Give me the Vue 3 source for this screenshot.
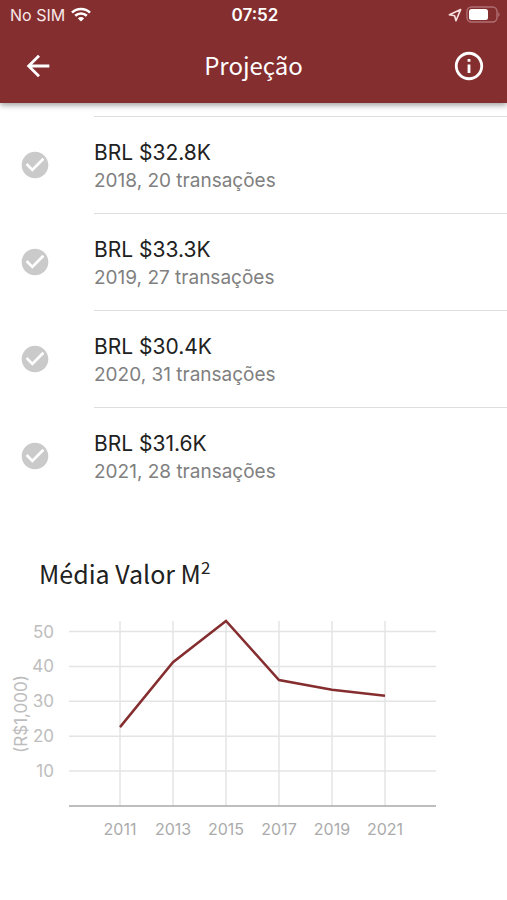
<template>
  <div class="screen">
    <header class="top">
      <div class="status-bar">
        <div class="carrier">
          <span>No SIM</span>
          <svg class="wifi" viewBox="0 0 20 15" aria-hidden="true">
            <path d="M1 5.6a13 13 0 0 1 18 0" />
            <path d="M4.2 8.8a8.4 8.4 0 0 1 11.6 0" />
            <path class="wifi-dot" d="M10 14.6l-3.1-3.2a4.4 4.4 0 0 1 6.2 0z" />
          </svg>
        </div>
        <span class="clock">07:52</span>
        <div class="indicators">
          <svg class="location" viewBox="0 0 14 14" aria-hidden="true">
            <path d="M12.6 1.6L1.4 6.8l5.2 1 1.4 5z" />
          </svg>
          <svg class="battery" viewBox="0 0 34 17" aria-hidden="true">
            <rect class="battery-frame" x="1" y="1" width="30" height="15" rx="4.5" />
            <rect class="battery-level" x="3" y="3" width="19" height="11" rx="2.5" />
            <path class="battery-cap" d="M32.2 6.2c1.8.6 1.8 4 0 4.6z" />
          </svg>
        </div>
      </div>
      <div class="app-bar">
        <button type="button" class="icon-button" aria-label="Voltar">
          <svg viewBox="0 0 24 24">
            <path d="M20 11H7.83l5.59-5.59L12 4l-8 8 8 8 1.41-1.41L7.83 13H20v-2z" />
          </svg>
        </button>
        <h1>Projeção</h1>
        <button type="button" class="icon-button" aria-label="Informações">
          <svg viewBox="0 0 24 24">
            <path d="M11 7h2v2h-2zm0 4h2v6h-2zm1-9C6.48 2 2 6.48 2 12s4.48 10 10 10 10-4.48 10-10S17.52 2 12 2zm0 18c-4.41 0-8-3.59-8-8s3.59-8 8-8 8 3.59 8 8-3.59 8-8 8z" />
          </svg>
        </button>
      </div>
    </header>

    <main>
      <ul class="list">
        <li v-for="item in items" :key="item.year" class="item">
          <svg class="check" viewBox="0 0 24 24" aria-hidden="true">
            <path d="M12 2C6.48 2 2 6.48 2 12s4.48 10 10 10 10-4.48 10-10S17.52 2 12 2zm-2 15l-5-5 1.41-1.41L10 14.17l7.59-7.59L19 8l-9 9z" />
          </svg>
          <div class="item-text">
            <span class="value">BRL ${{ item.value }}K</span>
            <span class="detail">{{ item.year }}, {{ item.count }} transações</span>
          </div>
        </li>
      </ul>

      <section class="average">
        <h2>Média Valor M<sup>2</sup></h2>
        <svg class="chart" viewBox="0 0 507 240" role="img" aria-label="Média Valor M²">
          <g class="grid">
            <line v-for="tick in ticks" :key="tick" :x1="left" :x2="right" :y1="scaleY(tick)" :y2="scaleY(tick)" />
            <line v-for="(p, i) in series" :key="p.year" :x1="scaleX(i)" :x2="scaleX(i)" :y1="top" :y2="base" />
          </g>
          <line class="axis" :x1="left" :x2="right" :y1="base" :y2="base" />
          <polyline class="line" :points="points" />
          <g class="y-labels">
            <text v-for="tick in ticks" :key="tick" x="54" :y="scaleY(tick) + 6">{{ tick }}</text>
          </g>
          <g class="x-labels">
            <text v-for="(p, i) in series" :key="p.year" :x="scaleX(i)" :y="base + 29">{{ p.year }}</text>
          </g>
          <text class="unit" transform="translate(27 113) rotate(-90)">(R$1,000)</text>
        </svg>
      </section>
    </main>
  </div>
</template>

<script setup>
import { computed } from 'vue';

const items = [
  { year: 2018, value: '32.8', count: 20 },
  { year: 2019, value: '33.3', count: 27 },
  { year: 2020, value: '30.4', count: 31 },
  { year: 2021, value: '31.6', count: 28 },
];

const series = [
  { year: 2011, value: 22.6 },
  { year: 2013, value: 41.2 },
  { year: 2015, value: 53 },
  { year: 2017, value: 36.1 },
  { year: 2019, value: 33.3 },
  { year: 2021, value: 31.6 },
];

const ticks = [10, 20, 30, 40, 50];

// Plot area inside the chart's viewBox
const left = 69;
const right = 436;
const top = 20;
const base = 205;

const scaleX = (index) => 120 + index * 53;
const scaleY = (value) => base - value * 3.49;

const points = computed(() => series.map((p, i) => `${scaleX(i)},${scaleY(p.value)}`).join(' '));
</script>

<style>
body {
  margin: 0;
  background: #fff;
}
</style>

<style scoped>
.screen {
  min-height: 100vh;
  background: #fff;
  color: #212121;
  font-family: Inter, Roboto, sans-serif;
}

/* Header */
.top {
  position: relative;
  background: #852e30;
  color: #fff;
  box-shadow: 0 2px 6px rgba(0, 0, 0, 0.4);
}

.status-bar {
  display: grid;
  grid-template-columns: 1fr auto 1fr;
  align-items: center;
  height: 29px;
  padding: 0 7px 0 10px;
  font-size: 16px;
}

.carrier,
.indicators {
  display: flex;
  align-items: center;
  gap: 6px;
}

.carrier {
  color: #f8e8e8;
}

.indicators {
  justify-content: flex-end;
  gap: 4px;
}

.clock {
  font-size: 17px;
  font-weight: 600;
}

.wifi {
  width: 20px;
  height: 15px;
  fill: none;
  stroke: #fff;
  stroke-width: 2.6;
}

.wifi .wifi-dot {
  fill: #fff;
  stroke: none;
}

.location {
  width: 14px;
  height: 14px;
  fill: none;
  stroke: #f8e0e0;
  stroke-width: 1.6;
  stroke-linejoin: round;
}

.battery {
  width: 34px;
  height: 17px;
}

.battery-frame {
  fill: none;
  stroke: #b06f71;
  stroke-width: 1.4;
}

.battery-level {
  fill: #fff;
}

.battery-cap {
  fill: #b06f71;
}

.app-bar {
  display: flex;
  align-items: center;
  justify-content: space-between;
  height: 74px;
  padding: 0 21px;
}

.icon-button {
  display: flex;
  padding: 0;
  border: none;
  background: none;
  color: inherit;
  cursor: pointer;
}

.icon-button svg {
  width: 34px;
  height: 34px;
  fill: currentColor;
}

h1,
h2 {
  margin: 0;
  font-family: "Noto Sans CJK SC", "Noto Sans", sans-serif;
  font-size: 25px;
  font-weight: 400;
  line-height: 36px;
}

h1 {
  padding-bottom: 2px;
  font-size: 24px;
}

/* Transactions */
.list {
  margin: 0;
  padding: 13px 0 0;
  list-style: none;
}

.item {
  display: flex;
  align-items: center;
}

.check {
  flex: none;
  width: 32px;
  height: 32px;
  margin: 0 41px 0 19px;
  padding-right: 2px;
  fill: #cacaca;
}

.item-text {
  display: flex;
  flex: 1;
  flex-direction: column;
  justify-content: center;
  box-sizing: border-box;
  height: 97px;
  padding-top: 4px;
  border-top: 1px solid #dedede;
}

.value {
  font-size: 21px;
  line-height: 28px;
}

.detail {
  color: #808080;
  font-size: 19px;
  line-height: 28px;
}

/* Chart */
.average {
  padding-top: 51px;
}

h2 {
  padding-left: 39px;
}

h2 sup {
  font-size: 17px;
  line-height: 0;
  vertical-align: 10px;
}

.chart {
  display: block;
  width: 100%;
  margin-top: 10px;
}

.grid {
  stroke: #e4e4e4;
  stroke-width: 1.5;
}

.axis {
  stroke: #a8a8a8;
  stroke-width: 1.5;
}

.line {
  fill: none;
  stroke: #852e30;
  stroke-width: 2.5;
}

.y-labels {
  fill: #bdbdbd;
  font-size: 17px;
  text-anchor: end;
}

.x-labels {
  fill: #ababab;
  font-size: 16px;
  text-anchor: middle;
}

.unit {
  fill: #bdbdbd;
  font-size: 17px;
  text-anchor: middle;
}
</style>
